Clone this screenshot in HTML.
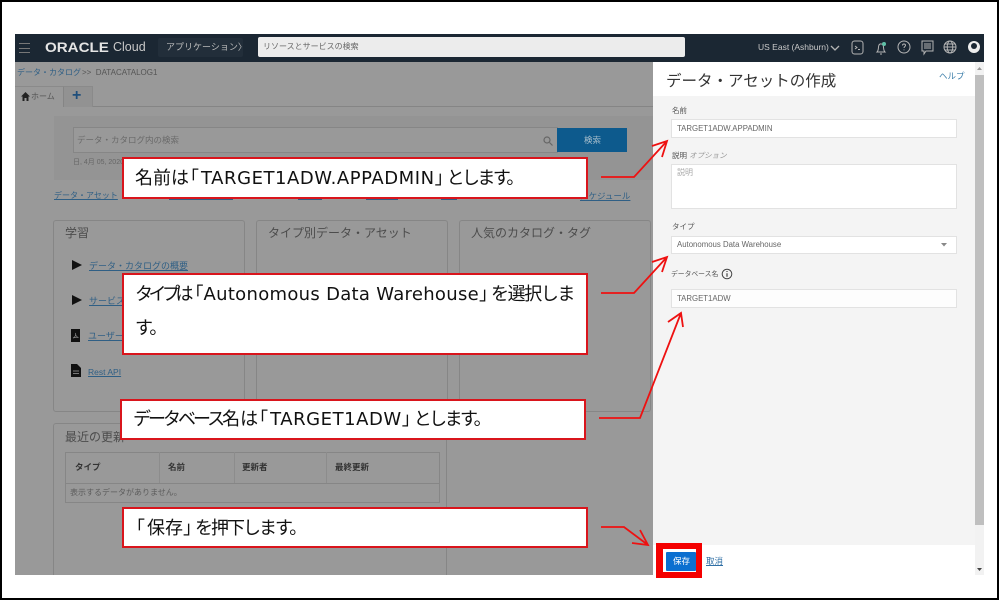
<!DOCTYPE html>
<html lang="ja"><head><meta charset="utf-8"><title>データ・アセットの作成</title>
<style>
html,body{margin:0;padding:0;background:#fff}
body{width:1000px;height:601px;position:relative;overflow:hidden;font-family:"Liberation Sans","Noto Sans CJK JP",sans-serif}
.a{position:absolute;white-space:nowrap}
.b{position:absolute;box-sizing:border-box}
.t{color:#555;font-size:8px;line-height:10px}
.l{color:#2f5f85;text-decoration:underline;font-size:8px;line-height:10px}
.card{position:absolute;box-sizing:border-box;border:1px solid #868686;border-radius:3px;background:#999}
.in{position:absolute;box-sizing:border-box;background:#fff;border:1px solid #e2e2e2;color:#666;font-size:7.8px;line-height:17px;padding-left:5px}
.co{position:absolute;box-sizing:border-box;background:#fff;border:2px solid #d9151c;color:#111;font-family:"DejaVu Sans","Noto Sans CJK JP",sans-serif;font-size:18px;white-space:nowrap}
.co>span{position:absolute;left:11px}
.o{margin-left:-8px;margin-right:2px}
.c{margin-right:-6px}
.k{letter-spacing:-3px}
.h{letter-spacing:-2.6px}
.m{letter-spacing:.55px}
</style></head><body>
<div class="b" style="left:0;top:0;width:999px;height:600px;border:2px solid #000"></div>
<div class="b" style="left:15px;top:34px;width:969px;height:541px;background:#999"></div>
<div class="b" style="left:15px;top:34px;width:969px;height:28px;background:#1b2733"></div>
<div class="b" style="left:19px;top:43px;width:11px;height:10px;border-top:1px solid #777;border-bottom:1px solid #777"></div>
<div class="b" style="left:19px;top:47.5px;width:11px;height:1px;background:#777"></div>
<div class="a" style="left:45px;top:40px;color:#e5e5e5;font-size:13.5px;line-height:15px;font-weight:bold;transform:scaleX(1.12);transform-origin:left">ORACLE</div>
<div class="a" style="left:113px;top:40px;color:#c8c8c8;font-size:12.5px;line-height:15px">Cloud</div>
<div class="b" style="left:158px;top:38px;width:85px;height:19px;background:#222e3a;border-radius:2px"></div>
<div class="a" style="left:166px;top:41px;color:#bbb;font-size:9px;line-height:12px">アプリケーション〉</div>
<div class="b" style="left:258px;top:37px;width:427px;height:20px;background:#ececec;border-radius:2px"></div>
<div class="a" style="left:263px;top:42px;color:#666;font-size:8px;line-height:10px">リソースとサービスの検索</div>
<div class="a" style="left:758px;top:42px;color:#c9c9c9;font-size:8.5px;line-height:10px">US East (Ashburn)</div>
<svg class="a" style="left:828px;top:34px" width="156" height="28" viewBox="828 34 156 28" fill="none" stroke="#b5b5b5" stroke-width="1">
<path d="M831 46l4 4 4-4" stroke-width="1.3"/>
<rect x="852" y="41" width="11" height="13" rx="2.5"/><path d="M855 46l2 1.5-2 1.5M858 49.5h2"/>
<path d="M877 52c2-2 1-5 2-7 .7-1.5 3-1.5 4 0 1 2 0 5 2 7zM880 54h2M877 52h8"/><circle cx="884" cy="44" r="2" fill="#5fc1a8" stroke="none"/>
<circle cx="904" cy="47" r="6"/><path d="M902.5 45.5c0-2 3-2 3 0 0 1-1.5 1-1.5 2.5M904 49.5v.7"/>
<path d="M922 41h11v10h-7l-2 3v-3h-2zM924 44h7M924 46h7M924 48h7"/>
<circle cx="950" cy="47" r="6"/><ellipse cx="950" cy="47" rx="2.8" ry="6"/><path d="M944 47h12M945 44h10M945 50h10"/>
<circle cx="974" cy="47" r="6" fill="#eee" stroke="none"/><circle cx="974" cy="46" r="3" fill="#1b2733" stroke="none"/>
</svg>

<div class="a" style="left:17px;top:68px;color:#2f5f85;font-size:8px;line-height:10px">データ・カタログ</div>
<div class="a t" style="left:82px;top:68px;font-size:8px">&gt;&gt; &nbsp;DATACATALOG1</div>
<div class="b" style="left:15px;top:106px;width:638px;height:1px;background:#858585"></div>
<div class="b" style="left:63px;top:86px;width:30px;height:21px;background:#929292;border:1px solid #8a8a8a;border-bottom:0"></div>
<div class="b" style="left:15px;top:86px;width:49px;height:21px;background:#999;border-top:1px solid #8a8a8a;border-right:1px solid #858585"></div>
<svg class="a" style="left:21px;top:92px" width="9" height="9"><path d="M4.5 0L9 4.5H7.5V9H5.5V6H3.5V9H1.5V4.5H0z" fill="#222"/></svg>
<div class="a t" style="left:31px;top:92px;font-size:8px">ホーム</div>
<div class="a" style="left:72px;top:87px;color:#1f4f7c;font-size:16px;line-height:18px;font-weight:bold">+</div>

<div class="b" style="left:54px;top:116px;width:599px;height:64px;background:#949494"></div>
<div class="b" style="left:73px;top:127px;width:485px;height:26px;background:#999;border:1px solid #868686"></div>
<div class="a" style="left:77px;top:135px;color:#6a6a6a;font-size:8.5px;line-height:10px">データ・カタログ内の検索</div>
<svg class="a" style="left:543px;top:136px" width="10" height="10" fill="none" stroke="#666" stroke-width="1.2"><circle cx="4" cy="4" r="3"/><path d="M6.5 6.5l3 3"/></svg>
<div class="b" style="left:557px;top:128px;width:70px;height:24px;background:#0d5a8d"></div>
<div class="a" style="left:584px;top:135px;font-size:8.5px;line-height:10px;color:#a9bfcc">検索</div>
<div class="a" style="left:73px;top:158px;color:#666;font-size:7px;line-height:9px">日, 4月 05, 2020</div>

<div class="a l" style="left:54px;top:191px">データ・アセット</div>
<div class="a l" style="left:169px;top:191px">用語集の作成ほか</div>
<div class="a l" style="left:298px;top:191px">ジョブ</div>
<div class="a l" style="left:366px;top:191px">タグ設定</div>
<div class="a l" style="left:441px;top:191px">接続</div>
<div class="a l" style="left:580px;top:191px;font-size:8.5px">スケジュール</div>

<div class="card" style="left:53px;top:220px;width:192px;height:192px"></div>
<div class="card" style="left:256px;top:220px;width:192px;height:192px"></div>
<div class="card" style="left:459px;top:220px;width:192px;height:192px"></div>
<div class="a" style="left:65px;top:226px;color:#4c4c4c;font-size:12px;line-height:14px">学習</div>
<div class="a" style="left:268px;top:226px;color:#4c4c4c;font-size:12px;line-height:14px">タイプ別データ・アセット</div>
<div class="a" style="left:471px;top:226px;color:#4c4c4c;font-size:12px;line-height:14px">人気のカタログ・タグ</div>
<svg class="a" style="left:71px;top:259px" width="12" height="12"><path d="M1 1l10 5-10 5z" fill="#111"/></svg>
<svg class="a" style="left:71px;top:294px" width="12" height="12"><path d="M1 1l10 5-10 5z" fill="#111"/></svg>
<div class="a l" style="left:89px;top:261px;font-size:9px">データ・カタログの概要</div>
<div class="a l" style="left:89px;top:296px;font-size:9px">サービス</div>
<div class="b" style="left:71px;top:329px;width:9px;height:13px;background:#111"></div>
<svg class="a" style="left:71px;top:329px" width="9" height="13" fill="none" stroke="#888" stroke-width=".7"><path d="M2 9c2-1 3-3 2.5-5 0 2 1 4 3 4.5-2-.3-4 0-5.5.5z"/></svg>
<div class="a l" style="left:88px;top:331px;font-size:9px">ユーザー</div>
<svg class="a" style="left:71px;top:364px" width="10" height="13"><path d="M0 0h6l4 4v9H0z" fill="#111"/><path d="M2 7h6M2 9.5h6" stroke="#999" stroke-width=".8"/></svg>
<div class="a l" style="left:88px;top:367px;font-size:8.5px">Rest API</div>

<div class="b" style="left:53px;top:423px;width:394px;height:152px;border:1px solid #868686;border-bottom:0;border-radius:3px 3px 0 0"></div>
<div class="a" style="left:65px;top:430px;color:#4c4c4c;font-size:12px;line-height:14px">最近の更新</div>
<div class="b" style="left:65px;top:452px;width:375px;height:51px;border:1px solid #868686"></div>
<div class="b" style="left:65px;top:483px;width:375px;height:1px;background:#868686"></div>
<div class="b" style="left:159px;top:452px;width:1px;height:31px;background:#8c8c8c"></div>
<div class="b" style="left:234px;top:452px;width:1px;height:31px;background:#8c8c8c"></div>
<div class="b" style="left:326px;top:452px;width:1px;height:31px;background:#8c8c8c"></div>
<div class="a" style="left:75px;top:462px;color:#333;font-size:8.5px;line-height:10px;font-weight:bold">タイプ</div>
<div class="a" style="left:168px;top:462px;color:#333;font-size:8.5px;line-height:10px;font-weight:bold">名前</div>
<div class="a" style="left:242px;top:462px;color:#333;font-size:8.5px;line-height:10px;font-weight:bold">更新者</div>
<div class="a" style="left:335px;top:462px;color:#333;font-size:8.5px;line-height:10px;font-weight:bold">最終更新</div>
<div class="a" style="left:70px;top:488px;color:#5c5c5c;font-size:8px;line-height:10px">表示するデータがありません。</div>

<!-- Panel -->
<div class="b" style="left:653px;top:62px;width:322px;height:513px;background:#fff"></div>
<div class="b" style="left:653px;top:96px;width:322px;height:449px;background:#f4f4f4"></div>
<div class="b" style="left:975px;top:62px;width:9px;height:513px;background:#f2f2f2"></div>
<div class="b" style="left:975px;top:75px;width:9px;height:450px;background:#bfbfbf"></div>
<svg class="a" style="left:975px;top:64px" width="9" height="8"><path d="M2 6l2.5-3 2.5 3z" fill="#999"/></svg>
<svg class="a" style="left:975px;top:567px" width="9" height="6"><path d="M2 1h5L4.5 4z" fill="#444"/></svg>
<div class="a" style="left:666px;top:71px;color:#333;font-size:15.5px;line-height:22px">データ・アセットの作成</div>
<div class="a" style="left:939px;top:71px;color:#3a7ca8;font-size:8.5px;line-height:10px">ヘルプ</div>
<div class="a t" style="left:672px;top:106px;font-size:7.5px">名前</div>
<div class="in" style="left:671px;top:119px;width:286px;height:19px">TARGET1ADW.APPADMIN</div>
<div class="a t" style="left:672px;top:151px;font-size:7.5px">説明 <i style="color:#999">オプション</i></div>
<div class="b" style="left:671px;top:164px;width:286px;height:45px;background:#fff;border:1px solid #e2e2e2"></div>
<div class="a" style="left:677px;top:168px;color:#aaa;font-size:8px;line-height:10px">説明</div>
<div class="a t" style="left:672px;top:222px;font-size:7.5px">タイプ</div>
<div class="in" style="left:671px;top:236px;width:286px;height:18px;line-height:16px">Autonomous Data Warehouse</div>
<svg class="a" style="left:941px;top:243px" width="6" height="4"><path d="M0 0h6L3 3.5z" fill="#888"/></svg>
<div class="a t" style="left:671px;top:270px;font-size:6.8px">データベース名</div>
<svg class="a" style="left:721px;top:268px" width="12" height="12" fill="none" stroke="#444"><circle cx="6" cy="6" r="4.8"/><path d="M6 5.2v3.5M6 3v1" stroke-width="1.2"/></svg>
<div class="in" style="left:671px;top:289px;width:286px;height:19px;background:#fdfdfd">TARGET1ADW</div>

<div class="b" style="left:656px;top:543px;width:46px;height:35px;background:#f40000"></div>
<div class="b" style="left:663px;top:549px;width:33px;height:23px;background:#fff"></div>
<div class="b" style="left:666px;top:552px;width:30px;height:19px;background:#0b6fd0;border-radius:1px"></div>
<div class="a" style="left:673px;top:556px;color:#fff;font-size:8.5px;line-height:11px">保存</div>
<div class="a" style="left:706px;top:556px;color:#2f6fa5;font-size:8.5px;line-height:11px;text-decoration:underline">取消</div>

<!-- Callouts -->
<div class="co" style="left:122px;top:157px;width:466px;height:42px"><span style="top:5px;line-height:30px">名前は<span class="o">「</span><span class="m">TARGET1ADW.APPADMIN</span><span class="c">」</span><span class="h">とします。</span></span></div>
<div class="co" style="left:122px;top:273px;width:466px;height:82px"><span style="top:5px;line-height:30px"><span style="letter-spacing:-4.5px">タイプ</span><span>は</span><span class="o" style="margin-right:0">「</span><span style="letter-spacing:.3px">Autonomous Data Warehouse</span><span class="c">」</span><span style="letter-spacing:-1.4px">を選択しま</span></span><span style="top:39px;line-height:30px;letter-spacing:-1.8px">す。</span></div>
<div class="co" style="left:120px;top:399px;width:466px;height:41px"><span style="left:11px;top:4px;line-height:30px"><span class="k">データベース</span>名は<span class="o">「</span><span class="m">TARGET1ADW</span><span class="c">」</span><span class="h">とします。</span></span></div>
<div class="co" style="left:122px;top:507px;width:466px;height:41px"><span style="top:5px;line-height:30px"><span class="o">「</span>保存<span class="c">」</span><span style="letter-spacing:-2px">を押下します。</span></span></div>

<svg class="a" style="left:0;top:0" width="1000" height="601" fill="none" stroke="#ee1111" stroke-width="1.8">
<path d="M601 177h33l33-36M652 146l15-5-5 16"/>
<path d="M601 293h33l33-36M652 262l15-5-5 15"/>
<path d="M599 418h41l41-105M668 322l13-9 2 14"/>
<path d="M601 527h23l24 18M632 543l16 2-8-15"/>
</svg>
</body></html>
